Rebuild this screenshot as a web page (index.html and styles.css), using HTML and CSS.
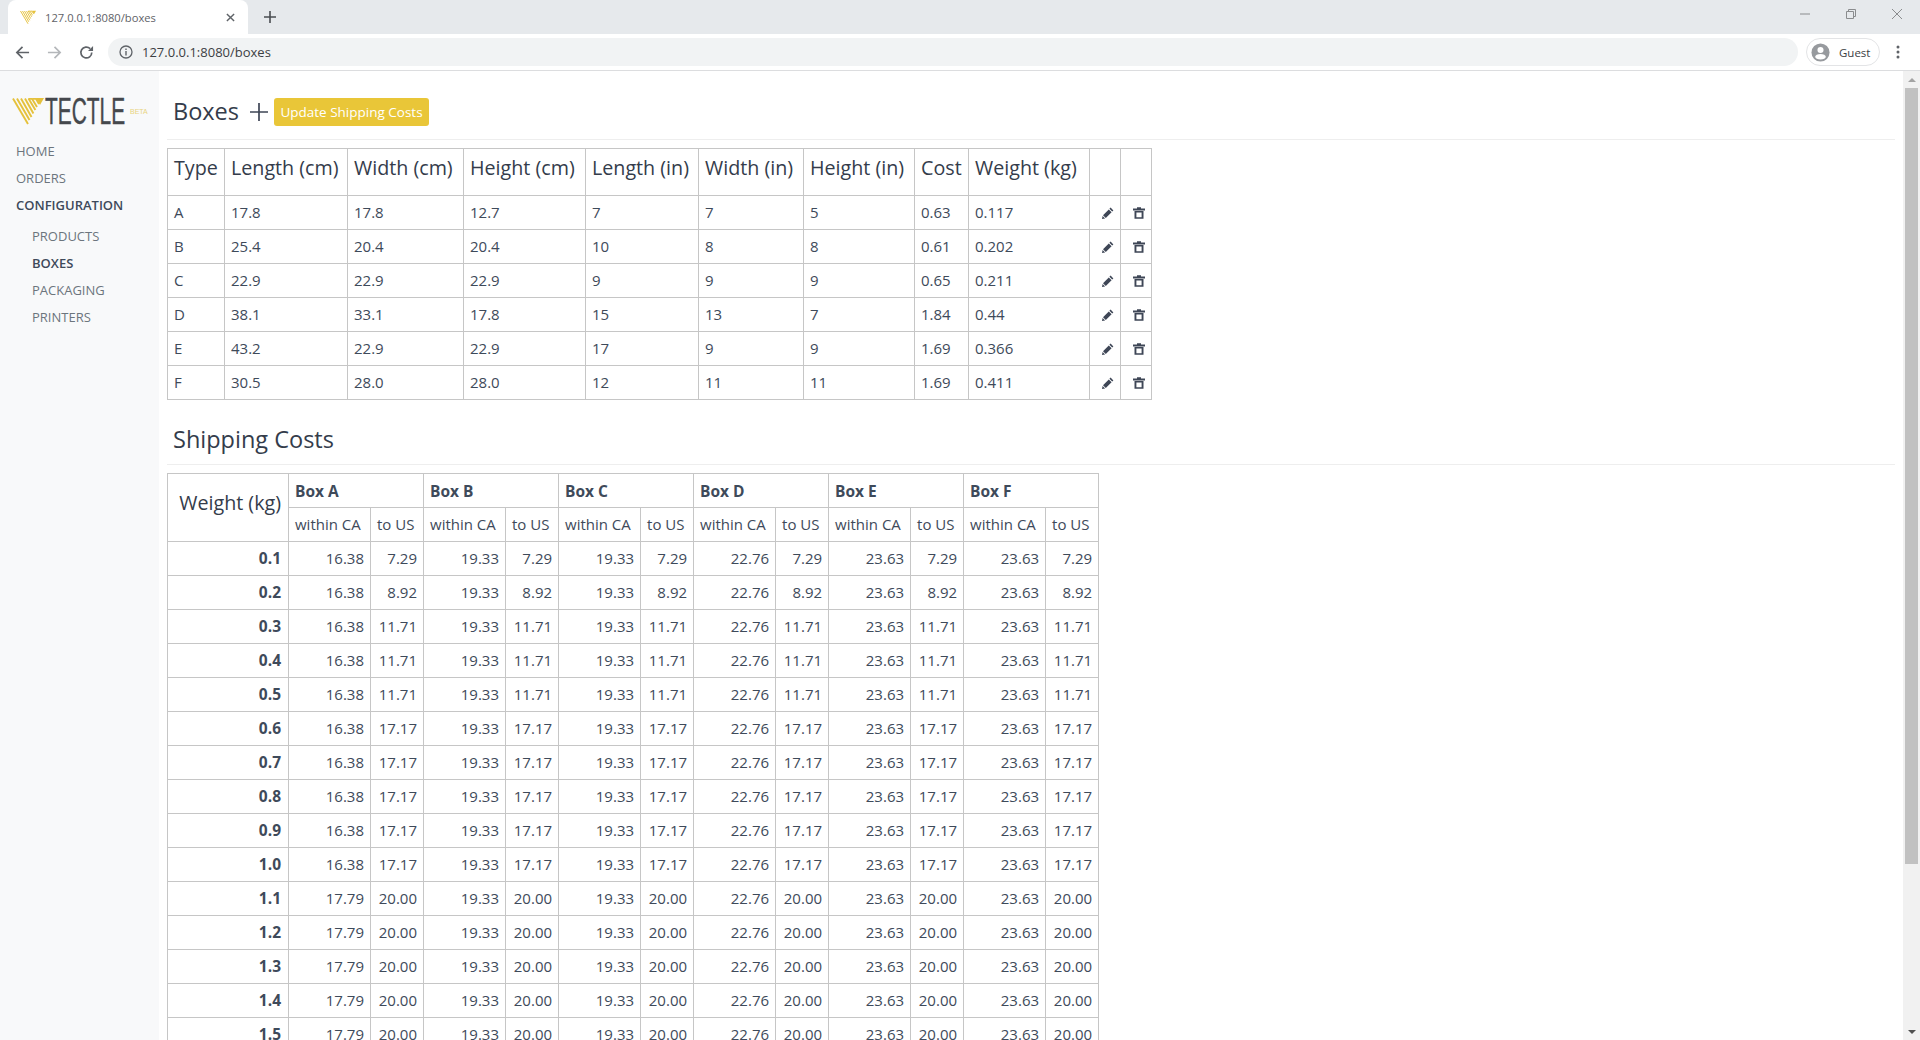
FILE: index.html
```html
<!DOCTYPE html>
<html lang="en">
<head>
<meta charset="utf-8">
<title>127.0.0.1:8080/boxes</title>
<link rel="stylesheet" href="styles.css">
</head>
<body>
<svg class="defs" width="0" height="0" aria-hidden="true">
  <symbol id="i-pencil" viewBox="0 0 12 12"><path d="M8.6 0.6 L11.4 3.4 L10.2 4.6 L7.4 1.8 Z M6.8 2.4 L9.6 5.2 L3.8 11 L1 8.2 Z M0.6 8.9 L3.1 11.4 L0 12 Z" fill="#3e4656"/></symbol>
  <symbol id="i-trash" viewBox="0 0 12 12"><path d="M4 0.2 H8 V1.6 H12 V3.4 H0 V1.6 H4 Z M1.5 4 H10.5 V11.8 H1.5 Z M3.4 5.4 V10.2 H8.6 V5.4 Z" fill="#3e4656" fill-rule="evenodd"/></symbol>
  <symbol id="i-v" viewBox="0 0 32 27">
    <g fill="none" stroke="#e5c13b" stroke-width="1.9">
      <path d="M1 0.5 L16 26"/>
      <path d="M5 0.5 L17.5 22"/>
      <path d="M9 0.5 L19.5 19"/>
      <path d="M13 0.5 L21.4 15.5"/>
      <path d="M16.5 0.5 L23.4 12"/>
      <path d="M16.5 0.8 H20 L25 9"/>
      <path d="M20.5 0.8 H24 L27 6"/>
    </g>
    <path d="M24 0 H32 L28 7 Z" fill="#e5c13b"/>
  </symbol>
</svg>

<header class="chrome">
  <div class="tabstrip">
    <div class="tab">
      <svg class="favicon"><use href="#i-v"/></svg>
      <span class="tab-title">127.0.0.1:8080/boxes</span>
      <svg class="tab-close" viewBox="0 0 10 10"><path d="M1 1 L9 9 M9 1 L1 9" stroke="#5f6368" stroke-width="1.6"/></svg>
    </div>
    <svg class="newtab" viewBox="0 0 12 12"><path d="M6 0 V12 M0 6 H12" stroke="#4a4d51" stroke-width="1.6"/></svg>
    <div class="winctl">
      <svg class="win-icon" viewBox="0 0 10 10"><path d="M0 5 H10" stroke="#8a8c8e" stroke-width="1"/></svg>
      <svg class="win-icon" viewBox="0 0 10 10"><path d="M0.5 2.5 H7.5 V9.5 H0.5 Z M2.5 2.5 V0.5 H9.5 V7.5 H7.5" fill="none" stroke="#8a8c8e" stroke-width="1"/></svg>
      <svg class="win-icon" viewBox="0 0 10 10"><path d="M0 0 L10 10 M10 0 L0 10" stroke="#8a8c8e" stroke-width="1"/></svg>
    </div>
  </div>
  <div class="toolbar">
    <svg class="nav-btn" viewBox="0 0 16 16"><path d="M15 8 H2 M8 2 L2 8 L8 14" fill="none" stroke="#5f6368" stroke-width="1.8"/></svg>
    <svg class="nav-btn" viewBox="0 0 16 16"><path d="M1 8 H14 M8 2 L14 8 L8 14" fill="none" stroke="#b4b7ba" stroke-width="1.8"/></svg>
    <svg class="nav-btn" viewBox="0 0 16 16"><path d="M13.6 8 A5.8 5.8 0 1 1 11.9 3.9" fill="none" stroke="#5f6368" stroke-width="1.8"/><path d="M9.6 6.4 H15 V1 Z" fill="#5f6368"/></svg>
    <div class="omnibox">
      <svg class="info" viewBox="0 0 14 14"><circle cx="7" cy="7" r="6" fill="none" stroke="#5f6368" stroke-width="1.3"/><path d="M7 6 V10.5 M7 3.4 V4.9" stroke="#5f6368" stroke-width="1.4"/></svg>
      <span class="url">127.0.0.1:8080/boxes</span>
    </div>
    <div class="guest">
      <svg class="avatar" viewBox="0 0 20 20"><circle cx="10" cy="10" r="9.5" fill="#979a9e"/><circle cx="10" cy="7.4" r="3.2" fill="#fff"/><ellipse cx="10" cy="14.4" rx="5.6" ry="2.9" fill="#fff"/></svg>
      <span class="guest-label">Guest</span>
    </div>
    <svg class="menu" viewBox="0 0 4 14"><circle cx="2" cy="2" r="1.5" fill="#5f6368"/><circle cx="2" cy="7" r="1.5" fill="#5f6368"/><circle cx="2" cy="12" r="1.5" fill="#5f6368"/></svg>
  </div>
</header>

<div class="viewport">
  <aside class="sidebar">
    <div class="logo">
      <svg class="logo-mark"><use href="#i-v"/></svg>
      <span class="logo-word">TECTLE</span>
      <span class="logo-beta">BETA</span>
    </div>
    <nav class="nav">
      <a class="nav-item">HOME</a>
      <a class="nav-item">ORDERS</a>
      <a class="nav-item nav-active">CONFIGURATION</a>
      <div class="subnav">
        <a class="nav-item">PRODUCTS</a>
        <a class="nav-item nav-active">BOXES</a>
        <a class="nav-item">PACKAGING</a>
        <a class="nav-item">PRINTERS</a>
      </div>
    </nav>
  </aside>

  <main class="main">
    <div class="section-head section-head-first">
      <h2 class="title">Boxes</h2>
      <svg class="plus" viewBox="0 0 18 18"><path d="M9 0 V18 M0 9 H18" stroke="#3e4656" stroke-width="1.7"/></svg>
      <button class="btn-update">Update Shipping Costs</button>
    </div>

    <table class="grid boxes">
      <colgroup>
        <col class="b1"><col class="b2"><col class="b3"><col class="b4"><col class="b5"><col class="b6"><col class="b7"><col class="b8"><col class="b9"><col class="b10"><col class="b10">
      </colgroup>
      <thead>
        <tr class="head-row"><th>Type</th><th>Length (cm)</th><th>Width (cm)</th><th>Height (cm)</th><th>Length (in)</th><th>Width (in)</th><th>Height (in)</th><th>Cost</th><th>Weight (kg)</th><th></th><th></th></tr>
      </thead>
      <tbody>
        <tr><td>A</td><td>17.8</td><td>17.8</td><td>12.7</td><td>7</td><td>7</td><td>5</td><td>0.63</td><td>0.117</td><td class="act"><svg class="ico"><use href="#i-pencil"/></svg></td><td class="act"><svg class="ico"><use href="#i-trash"/></svg></td></tr>
        <tr><td>B</td><td>25.4</td><td>20.4</td><td>20.4</td><td>10</td><td>8</td><td>8</td><td>0.61</td><td>0.202</td><td class="act"><svg class="ico"><use href="#i-pencil"/></svg></td><td class="act"><svg class="ico"><use href="#i-trash"/></svg></td></tr>
        <tr><td>C</td><td>22.9</td><td>22.9</td><td>22.9</td><td>9</td><td>9</td><td>9</td><td>0.65</td><td>0.211</td><td class="act"><svg class="ico"><use href="#i-pencil"/></svg></td><td class="act"><svg class="ico"><use href="#i-trash"/></svg></td></tr>
        <tr><td>D</td><td>38.1</td><td>33.1</td><td>17.8</td><td>15</td><td>13</td><td>7</td><td>1.84</td><td>0.44</td><td class="act"><svg class="ico"><use href="#i-pencil"/></svg></td><td class="act"><svg class="ico"><use href="#i-trash"/></svg></td></tr>
        <tr><td>E</td><td>43.2</td><td>22.9</td><td>22.9</td><td>17</td><td>9</td><td>9</td><td>1.69</td><td>0.366</td><td class="act"><svg class="ico"><use href="#i-pencil"/></svg></td><td class="act"><svg class="ico"><use href="#i-trash"/></svg></td></tr>
        <tr><td>F</td><td>30.5</td><td>28.0</td><td>28.0</td><td>12</td><td>11</td><td>11</td><td>1.69</td><td>0.411</td><td class="act"><svg class="ico"><use href="#i-pencil"/></svg></td><td class="act"><svg class="ico"><use href="#i-trash"/></svg></td></tr>
      </tbody>
    </table>

    <div class="section-head section-head-second">
      <h2 class="title">Shipping Costs</h2>
    </div>

    <table class="grid costs">
      <colgroup>
        <col class="c0"><col class="c1"><col class="c2"><col class="c1"><col class="c2"><col class="c1"><col class="c2"><col class="c1"><col class="c2"><col class="c1"><col class="c2"><col class="c1"><col class="c2">
      </colgroup>
      <thead>
        <tr><th rowspan="2" class="weight-head">Weight (kg)</th><th colspan="2" class="box-head">Box A</th><th colspan="2" class="box-head">Box B</th><th colspan="2" class="box-head">Box C</th><th colspan="2" class="box-head">Box D</th><th colspan="2" class="box-head">Box E</th><th colspan="2" class="box-head">Box F</th></tr>
        <tr><td>within CA</td><td>to US</td><td>within CA</td><td>to US</td><td>within CA</td><td>to US</td><td>within CA</td><td>to US</td><td>within CA</td><td>to US</td><td>within CA</td><td>to US</td></tr>
      </thead>
      <tbody class="nums">
        <tr><th>0.1</th><td>16.38</td><td>7.29</td><td>19.33</td><td>7.29</td><td>19.33</td><td>7.29</td><td>22.76</td><td>7.29</td><td>23.63</td><td>7.29</td><td>23.63</td><td>7.29</td></tr>
        <tr><th>0.2</th><td>16.38</td><td>8.92</td><td>19.33</td><td>8.92</td><td>19.33</td><td>8.92</td><td>22.76</td><td>8.92</td><td>23.63</td><td>8.92</td><td>23.63</td><td>8.92</td></tr>
        <tr><th>0.3</th><td>16.38</td><td>11.71</td><td>19.33</td><td>11.71</td><td>19.33</td><td>11.71</td><td>22.76</td><td>11.71</td><td>23.63</td><td>11.71</td><td>23.63</td><td>11.71</td></tr>
        <tr><th>0.4</th><td>16.38</td><td>11.71</td><td>19.33</td><td>11.71</td><td>19.33</td><td>11.71</td><td>22.76</td><td>11.71</td><td>23.63</td><td>11.71</td><td>23.63</td><td>11.71</td></tr>
        <tr><th>0.5</th><td>16.38</td><td>11.71</td><td>19.33</td><td>11.71</td><td>19.33</td><td>11.71</td><td>22.76</td><td>11.71</td><td>23.63</td><td>11.71</td><td>23.63</td><td>11.71</td></tr>
        <tr><th>0.6</th><td>16.38</td><td>17.17</td><td>19.33</td><td>17.17</td><td>19.33</td><td>17.17</td><td>22.76</td><td>17.17</td><td>23.63</td><td>17.17</td><td>23.63</td><td>17.17</td></tr>
        <tr><th>0.7</th><td>16.38</td><td>17.17</td><td>19.33</td><td>17.17</td><td>19.33</td><td>17.17</td><td>22.76</td><td>17.17</td><td>23.63</td><td>17.17</td><td>23.63</td><td>17.17</td></tr>
        <tr><th>0.8</th><td>16.38</td><td>17.17</td><td>19.33</td><td>17.17</td><td>19.33</td><td>17.17</td><td>22.76</td><td>17.17</td><td>23.63</td><td>17.17</td><td>23.63</td><td>17.17</td></tr>
        <tr><th>0.9</th><td>16.38</td><td>17.17</td><td>19.33</td><td>17.17</td><td>19.33</td><td>17.17</td><td>22.76</td><td>17.17</td><td>23.63</td><td>17.17</td><td>23.63</td><td>17.17</td></tr>
        <tr><th>1.0</th><td>16.38</td><td>17.17</td><td>19.33</td><td>17.17</td><td>19.33</td><td>17.17</td><td>22.76</td><td>17.17</td><td>23.63</td><td>17.17</td><td>23.63</td><td>17.17</td></tr>
        <tr><th>1.1</th><td>17.79</td><td>20.00</td><td>19.33</td><td>20.00</td><td>19.33</td><td>20.00</td><td>22.76</td><td>20.00</td><td>23.63</td><td>20.00</td><td>23.63</td><td>20.00</td></tr>
        <tr><th>1.2</th><td>17.79</td><td>20.00</td><td>19.33</td><td>20.00</td><td>19.33</td><td>20.00</td><td>22.76</td><td>20.00</td><td>23.63</td><td>20.00</td><td>23.63</td><td>20.00</td></tr>
        <tr><th>1.3</th><td>17.79</td><td>20.00</td><td>19.33</td><td>20.00</td><td>19.33</td><td>20.00</td><td>22.76</td><td>20.00</td><td>23.63</td><td>20.00</td><td>23.63</td><td>20.00</td></tr>
        <tr><th>1.4</th><td>17.79</td><td>20.00</td><td>19.33</td><td>20.00</td><td>19.33</td><td>20.00</td><td>22.76</td><td>20.00</td><td>23.63</td><td>20.00</td><td>23.63</td><td>20.00</td></tr>
        <tr><th>1.5</th><td>17.79</td><td>20.00</td><td>19.33</td><td>20.00</td><td>19.33</td><td>20.00</td><td>22.76</td><td>20.00</td><td>23.63</td><td>20.00</td><td>23.63</td><td>20.00</td></tr>
      </tbody>
    </table>
  </main>

  <div class="scrollbar">
    <span class="arrow arrow-up"></span>
    <div class="thumb"></div>
    <div class="track-fill"></div>
    <span class="arrow arrow-down"></span>
  </div>
</div>
</body>
</html>
```

FILE: styles.css
```css
* { box-sizing: border-box; }
html, body { margin: 0; height: 100%; overflow: hidden; }
body {
  display: flex;
  flex-direction: column;
  background: #fff;
  color: #3e4a5a;
  font-family: "Open Sans", "Noto Sans", sans-serif;
  font-size: 15px;
}
.defs { position: absolute; }

/* browser chrome */
.chrome { flex: none; height: 71px; border-bottom: 1px solid #dcdddf; }
.tabstrip { display: flex; align-items: center; height: 34px; background: #e6e9ec; padding-left: 8px; }
.tab {
  display: flex;
  align-items: center;
  width: 240px;
  height: 34px;
  background: #fff;
  border-radius: 8px 8px 0 0;
  padding: 0 13px 0 12px;
}
.favicon { width: 16px; height: 15px; margin-right: 9px; flex: none; }
.tab-title { flex: 1; font-size: 11.2px; color: #5f6368; }
.tab-close { width: 9px; height: 9px; }
.newtab { width: 12px; height: 12px; margin-left: 16px; }
.winctl { display: flex; align-items: center; gap: 36px; margin-left: auto; padding-right: 18px; padding-bottom: 6px; }
.win-icon { width: 10px; height: 10px; }
.toolbar { display: flex; align-items: center; height: 36px; padding: 0 20px 0 15px; }
.nav-btn { width: 15px; height: 15px; margin-right: 17px; flex: none; }
.omnibox {
  display: flex;
  align-items: center;
  flex: 1;
  height: 28px;
  margin-left: -3px;
  padding-left: 11px;
  background: #f1f3f4;
  border-radius: 14px;
}
.info { width: 14px; height: 14px; margin-right: 9px; }
.url { font-size: 13px; color: #3c4043; }
.guest {
  display: flex;
  align-items: center;
  width: 74px;
  height: 28px;
  margin-left: 8px;
  padding-left: 4px;
  border: 1px solid #e3e4e6;
  border-radius: 14px;
}
.avatar { width: 19px; height: 19px; margin-right: 9px; }
.guest-label { font-size: 11.5px; color: #3c4043; }
.menu { width: 4px; height: 14px; margin-left: 16px; }

/* page layout */
.viewport { flex: 1; display: flex; min-height: 0; }
.sidebar { flex: none; width: 159px; background: #f8f9fa; padding-top: 27px; }
.logo { position: relative; height: 27px; }
.logo-mark { position: absolute; left: 12px; top: 0; width: 32px; height: 27px; }
.logo-word {
  position: absolute;
  left: 45px;
  top: -6px;
  font-family: "Liberation Sans", sans-serif;
  font-size: 36px;
  line-height: 40px;
  color: #45484c;
  -webkit-text-stroke: 0.4px #45484c;
  transform: scaleX(0.58);
  transform-origin: left top;
}
.logo-beta {
  position: absolute;
  left: 130px;
  top: 9px;
  font-family: "Liberation Sans", sans-serif;
  font-size: 7px;
  line-height: 9px;
  color: #e8d47f;
}
.nav { margin-top: 13px; padding-left: 16px; display: flex; flex-direction: column; }
.nav-item { height: 27px; line-height: 27px; font-size: 13px; color: #6c757d; white-space: nowrap; display: block; }
.nav-active { color: #3e4a5a; font-weight: 600; }
.subnav { margin-top: 4px; padding-left: 16px; }

.main { flex: 1; min-width: 0; overflow: hidden; padding-left: 8px; padding-right: 8px; }
.section-head { display: flex; align-items: center; border-bottom: 1px solid #eeeeee; }
.section-head-first { height: 69px; margin-bottom: 8px; padding: 12px 0 0 6px; }
.section-head-second { height: 65px; margin-bottom: 8px; padding: 13px 0 0 6px; }
.title { margin: 0; font-size: 23.5px; font-weight: 500; color: #343c4b; line-height: 30px; }
.plus { width: 18px; height: 18px; margin-left: 11px; margin-top: 2px; }
.btn-update {
  height: 28px;
  margin-left: 6px;
  margin-top: 2px;
  padding: 0;
  width: 155px;
  border: 0;
  border-radius: 3px;
  background: #e9c638;
  color: #fff;
  font-family: inherit;
  font-size: 13.5px;
  white-space: nowrap;
}

/* tables */
.grid { border-collapse: collapse; table-layout: fixed; font-size: 15px; }
.grid th, .grid td { border: 1px solid #c6c6c6; height: 34px; padding: 0 6px 1px; white-space: nowrap; overflow: hidden; text-align: left; font-weight: 400; }
.boxes { width: 985px; }
.boxes thead th { height: 47px; font-size: 19.7px; font-weight: 500; padding-bottom: 9px; color: #343c4b; }
.b1 { width: 57px; } .b2 { width: 123px; } .b3 { width: 116px; } .b4 { width: 122px; } .b5 { width: 113px; }
.b6 { width: 105px; } .b7 { width: 111px; } .b8 { width: 54px; } .b9 { width: 121px; } .b10 { width: 31px; }
.grid .act { padding: 0 0 0 5px; }
.ico { width: 12px; height: 12px; display: block; margin: 0 auto; }
.costs { width: 931px; }
.c0 { width: 121px; } .c1 { width: 82px; } .c2 { width: 53px; }
.grid .weight-head { font-size: 19.7px; font-weight: 500; text-align: right; color: #343c4b; padding: 0 7px 10px 0; }
.grid .box-head { font-weight: 700; font-size: 15.5px; padding-bottom: 0; }
.nums td { text-align: right; }
.grid .nums th { text-align: right; font-weight: 700; font-size: 15.5px; padding-right: 7px; }

/* scrollbar */
.scrollbar { flex: none; width: 17px; background: #f1f1f1; display: flex; flex-direction: column; align-items: center; padding-bottom: 6px; }
.arrow { flex: none; width: 0; height: 0; border-left: 4px solid transparent; border-right: 4px solid transparent; }
.arrow-up { border-bottom: 4px solid #a3a3a3; margin-top: 7px; }
.arrow-down { border-top: 4px solid #505050; }
.thumb { flex: none; width: 13px; height: 776px; margin-top: 6px; background: #c1c1c1; }
.track-fill { flex: 1; }
```
